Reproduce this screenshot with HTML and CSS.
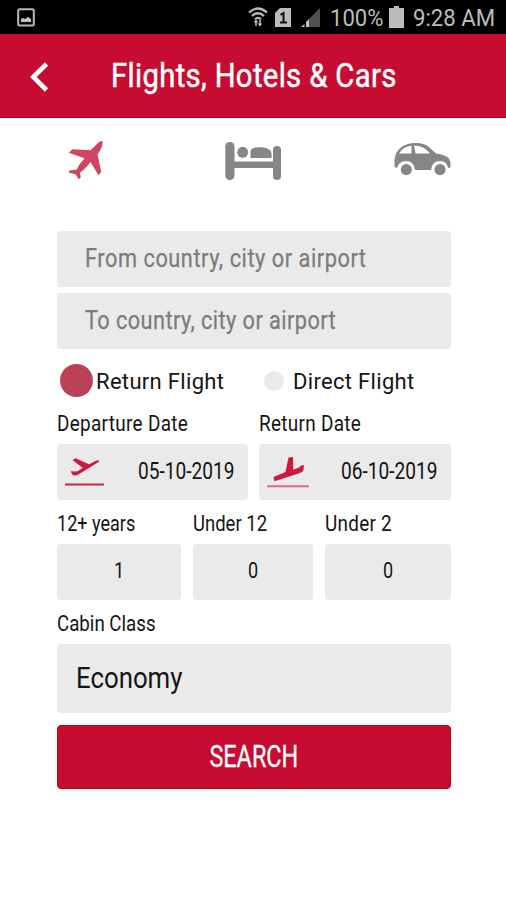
FILE: index.html
```html
<!DOCTYPE html>
<html lang="en">
<head>
<meta charset="utf-8">
<title>Flights, Hotels &amp; Cars</title>
<link rel="stylesheet" href="styles.css">
</head>
<body>
<div class="status">
  <svg class="shot" width="18" height="19" viewBox="0 0 18 19"><rect x="1.2" y="1.2" width="15.6" height="16.2" rx="1.5" fill="none" stroke="#b8b8b8" stroke-width="2"/><path d="M4 14v-3l2-1 2 1 3-2 3 2v3z" fill="#c4c4c4"/></svg>
  <svg class="wifi" width="20" height="20" viewBox="0 0 20 20" fill="none" stroke="#b8b8b8" stroke-width="2.2"><path d="M1 5.5Q10-2.5 19 5.500M4 9Q10 3.500 16 9M7 12.200Q10 9.500 13 12.200"/><path d="M8 19v-5M12 13v5" stroke-width="1.6"/><path d="M5.700 15.500L8 12.500l2.300 3zM9.700 16.500L12 19.500l2.300-3z" fill="#c4c4c4" stroke="none"/></svg>
  <svg class="sim" width="16" height="19" viewBox="0 0 16 19"><path d="M5 0h11v19H0V5z" fill="#bcbcbc"/><path d="M5.500 6.800L8.500 5v9.500M5 14.500h7" fill="none" stroke="#111" stroke-width="2"/></svg>
  <svg class="signal" width="19" height="19" viewBox="0 0 19 19"><path d="M19 0v19H8V11z" fill="#505050"/><path d="M8 11v8H5v-5zM3.500 16v3H0z" fill="#c4c4c4"/></svg>
  <span class="pct"><span class="t">100%</span></span>
  <svg class="battery" width="15" height="22" viewBox="0 0 15 22"><path d="M5 0h5v2h5v20H0V2h5z" fill="#bcbcbc"/></svg>
  <span class="clock"><span class="t">9:28 AM</span></span>
</div>
<header class="bar">
  <svg class="back" width="20" height="32" viewBox="0 0 20 32"><path d="M17.500 3L4.300 16l13.200 13" fill="none" stroke="#fff" stroke-width="4.600"/></svg>
  <h1><span class="t t-title">Flights, Hotels &amp; Cars</span></h1>
</header>
<nav class="tabs">
  <svg width="38" height="42" viewBox="68 139 38 42"><path fill="#d04562" d="M102.500 141Q99 141 96 145L90.500 150.200L72.500 149.200L68.800 152.700L84.500 158.200Q79 164 76.500 169.800L70 170.200L68.500 172.500L75.500 174.300L78.800 179.300L80.800 177.500L80 172.500Q85 169.500 90.500 162L98.500 175.300L101.200 172L97.600 154.500Q103.500 146 102.500 141Z"/></svg>
  <svg width="56" height="39" viewBox="225.500 142 56 39" fill="#868686"><rect x="225.800" y="142" width="9.200" height="38" rx="4.500"/><rect x="273.500" y="146" width="8" height="34" rx="4"/><rect x="231" y="161.500" width="46" height="6.500"/><circle cx="243.200" cy="152.300" r="5.500"/><path d="M251 158v-7q1-3 5-3.500 10-1.500 15 3 1.500 2 1 7.500z"/></svg>
  <svg width="57" height="35" viewBox="394 142 57 35" fill="#868686"><path fill-rule="evenodd" d="M394.500 167V160Q395 152 401 147.500Q406 143 416 143Q425 143 430 148L436 153.500Q445 154.500 448.500 158Q451 161 450.500 167.500L448 168Q447 161 440 161Q432 161 431 170H415Q414 161 406 161Q399 161 397 168ZM399 153.500H411.500V145.500Q403 146.500 399 153.500ZM414 145.500L415.500 153.500H430Q424 145.500 414 145.500Z"/><circle cx="406.300" cy="169.600" r="5.600"/><circle cx="440" cy="169.600" r="5.600"/></svg>
</nav>
<main class="form">
  <div class="field place"><span class="t t-from">From country, city or airport</span></div>
  <div class="field place second"><span class="t t-to">To country, city or airport</span></div>
  <div class="radios">
    <span class="dot on"></span><span class="opt one">Return Flight</span>
    <span class="dot"></span><span class="opt">Direct Flight</span>
  </div>
  <div class="dates">
    <section>
      <label><span class="t t-dep">Departure Date</span></label>
      <div class="field date">
        <svg width="40" height="34" viewBox="65 455 40 34"><path d="M65 484.500h39" stroke="#d32146" stroke-width="2"/><path fill="#cf1740" d="M70.500 471.200L77 471.500L82.800 468L72.500 460L75.500 458.200L89 464.200L96.500 460.500Q99.500 459.800 99 461.700L78 474.700Q74.500 476 72.500 474.800Z"/></svg>
        <span class="t t-date">05-10-2019</span>
      </div>
    </section>
    <section>
      <label><span class="t t-dep">Return Date</span></label>
      <div class="field date">
        <svg width="43" height="34" viewBox="266 455 43 34"><path d="M266 486.200h42" stroke="#df6b84" stroke-width="2"/><path fill="#cf1740" d="M272.500 477L284.500 472L287.500 457.500L292 457L292.200 469.800L298 467.500L300 465.500L303 465.200L302.500 470Q302 472 299 473L273.500 481.300Z"/></svg>
        <span class="t t-date">06-10-2019</span>
      </div>
    </section>
  </div>
  <div class="people">
    <section><label><span class="t">12+ years</span></label><div class="field num"><span class="t">1</span></div></section>
    <section><label><span class="t t-child">Under 12</span></label><div class="field num"><span class="t">0</span></div></section>
    <section><label><span class="t t-inf">Under 2</span></label><div class="field num"><span class="t">0</span></div></section>
  </div>
  <label><span class="t t-cabin">Cabin Class</span></label>
  <div class="field cabin"><span class="t t-eco">Economy</span></div>
  <button class="search"><span class="t t-search">SEARCH</span></button>
</main>
</body>
</html>
```
FILE: styles.css
```css
* { box-sizing: border-box; }
body { margin: 0; width: 506px; height: 900px; background: #fff; color: #151515; font-family: Roboto, "Liberation Sans", sans-serif; overflow: hidden; }
svg { display: block; flex: none; }
.t { display: inline-block; white-space: nowrap; transform-origin: left center; transform: scaleX(var(--sx, .82)); }
.status { height: 34px; background: #000; color: #bcbcbc; display: flex; align-items: flex-start; font-size: 24px; line-height: 36px; }
.shot { margin: 8px 0 0 17px; }
.wifi { margin: 7px 0 0 213px; }
.sim { margin: 8px 0 0 7px; }
.signal { margin: 8px 0 0 10px; }
.pct { margin-left: 10px; width: 59px; --sx: .92; }
.battery { margin-top: 6px; }
.clock { margin-left: 9px; --sx: .925; }
.bar { height: 84px; background: #c60c30; border-bottom: 1px solid #c50010; display: flex; align-items: center; }
.back { margin: 2px 0 0 29px; }
.bar h1 { margin: -2px 0 0 62px; font-size: 34px; line-height: 40px; font-weight: 400; color: #fff; }
.t-title { --sx: .86; letter-spacing: .4px; -webkit-text-stroke: .5px #fff; }
.tabs { height: 113px; padding: 21px 55px 0 68px; display: flex; justify-content: space-between; align-items: flex-start; }
.tabs svg:nth-child(2) { margin: 3px 0 0 6px; }
.tabs svg:nth-child(3) { margin-top: 3px; }
.form { width: 394px; margin-left: 57px; }
.field { height: 56px; background: #eaeaea; border-radius: 4px; display: flex; align-items: center; }
.place { padding: 0 0 2px 28px; color: #7c7c7c; font-size: 25px; }
.second { margin-top: 6px; }
.t-from { --sx: .87; letter-spacing: .62px; }
.t-to { --sx: .87; letter-spacing: .48px; }
.place .t { -webkit-text-stroke: .25px #7c7c7c; }
.radios { height: 63px; display: flex; align-items: center; font-size: 22px; padding: 1px 0 0 3px; }
.dot { width: 20px; height: 20px; border-radius: 50%; background: #eaeaea; margin: -1px 9px 0 0; flex: none; }
.dot.on { width: 33px; height: 33px; background: #bd4059; margin-right: 3px; }
.opt { white-space: nowrap; letter-spacing: .32px; }
.one { width: 168px; }
label { display: block; height: 32px; font-size: 22px; line-height: 23px; }
.t-dep { --sx: .86; letter-spacing: .36px; }
.t-child { --sx: .84; }
.t-inf { --sx: .86; letter-spacing: .3px; }
.t-cabin { --sx: .85; }
.dates { display: grid; grid-template-columns: 191px 192px; column-gap: 11px; }
.date { padding-left: 8px; font-size: 23px; }
.date .t { margin: -2px 0 0 33px; --sx: .83; }
.dates section + section .date .t { margin-left: 31px; }
.people { display: grid; grid-template-columns: 124px 120px 126px; column-gap: 12px; margin: 12px 0; }
.num { justify-content: center; font-size: 22px; }
.num .t { transform-origin: center; margin-top: -4px; }
.cabin { height: 69px; padding: 0 0 2px 19px; font-size: 30px; }
.t-eco { --sx: .86; }
.search { display: flex; align-items: center; justify-content: center; width: 394px; height: 64px; margin: 12px 0 0; padding: 0 0 2px; border: 1px solid #c50010; border-radius: 4px; background: #c60c30; color: #fff; font: 31px Roboto, sans-serif; }
.search .t { transform-origin: center; --sx: .755; -webkit-text-stroke: .3px #fff; }
```
